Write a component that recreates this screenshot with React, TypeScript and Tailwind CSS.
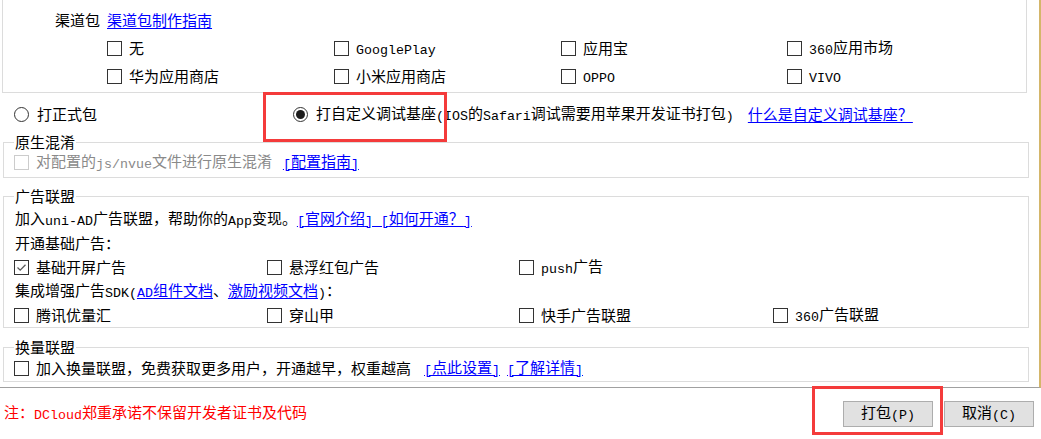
import type { ReactNode } from 'react';

const LINK = 'text-[#0000ff] underline underline-offset-[2px]';

function L({ children }: { children: ReactNode }) {
  return <span className="align-[-1px] font-['Liberation_Mono',monospace] text-[13.3px]">{children}</span>;
}

function Box({ checked = false, disabled = false }: { checked?: boolean; disabled?: boolean }) {
  return (
    <span
      className={`flex h-[15px] w-[15px] shrink-0 items-center justify-center border bg-white ${
        disabled ? 'border-[#cccccc]' : 'border-[#333333]'
      }`}
    >
      {checked && (
        <svg width="11" height="11" viewBox="0 0 11 11">
          <polyline points="1.5,5.5 4.2,8.2 9.5,2.8" fill="none" stroke="#5a5a5a" strokeWidth="1.3" />
        </svg>
      )}
    </span>
  );
}

function Radio({ on = false }: { on?: boolean }) {
  return (
    <span className="flex h-[15px] w-[15px] shrink-0 items-center justify-center rounded-full border border-[#333333] bg-white">
      {on && <span className="h-[9px] w-[9px] rounded-full bg-[#1c1c1c]" />}
    </span>
  );
}

function Item({ children, checked }: { children: ReactNode; checked?: boolean }) {
  return (
    <div className="flex items-center gap-[7px]">
      <Box checked={checked} />
      <span className="whitespace-nowrap">{children}</span>
    </div>
  );
}

function Group({ title, children, className = '' }: { title: string; children: ReactNode; className?: string }) {
  return (
    <fieldset className={`ml-[3px] w-[1026px] border border-[#dcdcdc] pl-[10px] ${className}`}>
      <legend className="px-[1px] leading-[20px]">{title}</legend>
      {children}
    </fieldset>
  );
}

export default function App() {
  return (
    <div className="relative flex h-[439px] w-[1041px] flex-col overflow-hidden bg-white font-['Noto_Sans_CJK_SC',sans-serif] text-[15px] text-black">
      <div className="h-[388px] border-r-2 border-b border-r-[#d4b66a] border-b-[#a0a0a0]">
        {/* channel packages */}
        <div className="ml-[2px] w-[1025px] border-x border-b border-[#dcdcdc] pt-[6px] pb-[2px]">
          <div className="flex h-[28px] items-center pl-[52px]">
            <span>渠道包</span>
            <span className={`ml-[7px] ${LINK}`}>渠道包制作指南</span>
          </div>
          <div className="grid grid-cols-[227px_227px_226px_1fr] pl-[104px] [&>div]:h-[28px]">
            <Item>无</Item>
            <Item><L>GooglePlay</L></Item>
            <Item>应用宝</Item>
            <Item><L>360</L>应用市场</Item>
            <Item>华为应用商店</Item>
            <Item>小米应用商店</Item>
            <Item><L>OPPO</L></Item>
            <Item><L>VIVO</L></Item>
          </div>
        </div>

        {/* build type */}
        <div className="mt-[7px] mb-[4px] flex h-[28px] items-center pl-[14px] whitespace-nowrap">
          <div className="flex w-[279px] items-center gap-[8px]">
            <Radio />
            <span>打正式包</span>
          </div>
          <div className="flex items-center gap-[8px]">
            <Radio on />
            <span>
              打自定义调试基座<L>(IOS</L>的<L>Safari</L>调试需要用苹果开发证书打包<L>)</L>
            </span>
          </div>
          <span className={`ml-[14px] ${LINK}`}>什么是自定义调试基座？</span>
        </div>

        <Group title="原生混淆" className="pb-[5px]">
          <div className="flex h-[20px] items-center gap-[7px] whitespace-nowrap">
            <Box disabled />
            <span className="text-[#8a8a8a]">
              对配置的<L>js/nvue</L>文件进行原生混淆
            </span>
            <span className={`ml-[4px] ${LINK}`}>
              <L>[</L>配置指南<L>]</L>
            </span>
          </div>
        </Group>

        <Group title="广告联盟" className="mt-[8px] pt-[1px]">
          <div className="flex h-[24px] items-center pl-[1px] whitespace-nowrap">
            <span>
              加入<L>uni-AD</L>广告联盟，帮助你的<L>App</L>变现。
              <span className={LINK}>
                <L>[</L>官网介绍<L>] [</L>如何开通？<L>]</L>
              </span>
            </span>
          </div>
          <div className="flex h-[24px] items-center pl-[1px]">开通基础广告：</div>
          <div className="grid h-[24px] grid-cols-[253px_252px_254px_1fr] items-center">
            <Item checked>基础开屏广告</Item>
            <Item>悬浮红包广告</Item>
            <Item><L>push</L>广告</Item>
          </div>
          <div className="flex h-[24px] items-center pl-[1px] whitespace-nowrap">
            <span>
              集成增强广告<L>SDK(</L>
              <span className={LINK}>
                <L>AD</L>组件文档
              </span>
              、<span className={LINK}>激励视频文档</span>
              <L>)</L>：
            </span>
          </div>
          <div className="grid h-[24px] grid-cols-[253px_252px_254px_1fr] items-center">
            <Item>腾讯优量汇</Item>
            <Item>穿山甲</Item>
            <Item>快手广告联盟</Item>
            <Item><L>360</L>广告联盟</Item>
          </div>
        </Group>

        <Group title="换量联盟" className="mt-[9px] pb-[2px]">
          <div className="flex h-[22px] items-center whitespace-nowrap">
            <Item>加入换量联盟，免费获取更多用户，开通越早，权重越高</Item>
            <span className={`ml-[13px] ${LINK}`}>
              <L>[</L>点此设置<L>]</L>
            </span>
            <span className={`ml-[7px] ${LINK}`}>
              <L>[</L>了解详情<L>]</L>
            </span>
          </div>
        </Group>
      </div>

      {/* footer */}
      <div className="flex h-[51px] items-center justify-between pl-[4px] pr-[7px]">
        <span className="text-[#ff0000]">
          注：<L>DCloud</L>郑重承诺不保留开发者证书及代码
        </span>
        <div className="flex gap-[11px]">
          <button className="flex h-[26px] w-[90px] items-center justify-center border border-[#adadad] bg-[#e1e1e1]">
            <span>
              打包<L>(P)</L>
            </span>
          </button>
          <button className="flex h-[26px] w-[90px] items-center justify-center border border-[#adadad] bg-[#e1e1e1]">
            <span>
              取消<L>(C)</L>
            </span>
          </button>
        </div>
      </div>

      {/* red annotation boxes */}
      <div className="pointer-events-none absolute top-[92px] left-[263px] h-[50px] w-[184px] border-[3px] border-[#f43b3b]" />
      <div className="pointer-events-none absolute top-[386px] left-[812px] h-[49px] w-[131px] border-[3px] border-[#f43b3b]" />
    </div>
  );
}
